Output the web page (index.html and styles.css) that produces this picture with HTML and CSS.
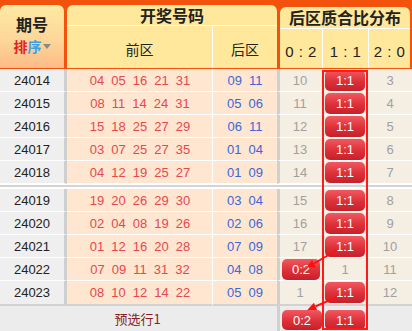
FILE: index.html
```html
<!DOCTYPE html>
<html lang="zh">
<head>
<meta charset="utf-8">
<title>后区质合比分布</title>
<link rel="stylesheet" href="styles.css">
</head>
<body>
<div class="board">
  <div class="head">
    <div class="h-issue">
      <div class="h-issue-t">期号</div>
      <div class="h-sort"><span class="s-red">排</span><span class="s-blue">序</span><span class="s-tri"></span></div>
    </div>
    <div class="h-draw">
      <div class="h-title">开奖号码</div>
      <div class="h-sub2"><div class="h-cell">前区</div><div class="h-cell h-line">后区</div></div>
    </div>
    <div class="h-dist">
      <div class="h-title h-title-d">后区质合比分布</div>
      <div class="h-sub3"><div class="h-cell h-num">0 : 2</div><div class="h-cell h-num h-line">1 : 1</div><div class="h-cell h-num h-line">2 : 0</div></div>
    </div>
  </div>

  <div class="rows">
    <div class="row"><div class="issue">24014</div><div class="front"><span>04</span><span>05</span><span>16</span><span>21</span><span>31</span></div><div class="back"><span>09</span><span>11</span></div><div class="d02">10</div><div class="d11"><span class="badge">1:1</span></div><div class="d20">3</div></div>
    <div class="row"><div class="issue">24015</div><div class="front"><span>08</span><span>11</span><span>14</span><span>24</span><span>31</span></div><div class="back"><span>05</span><span>06</span></div><div class="d02">11</div><div class="d11"><span class="badge">1:1</span></div><div class="d20">4</div></div>
    <div class="row"><div class="issue">24016</div><div class="front"><span>15</span><span>18</span><span>25</span><span>27</span><span>29</span></div><div class="back"><span>06</span><span>11</span></div><div class="d02">12</div><div class="d11"><span class="badge">1:1</span></div><div class="d20">5</div></div>
    <div class="row"><div class="issue">24017</div><div class="front"><span>03</span><span>07</span><span>25</span><span>27</span><span>35</span></div><div class="back"><span>01</span><span>04</span></div><div class="d02">13</div><div class="d11"><span class="badge">1:1</span></div><div class="d20">6</div></div>
    <div class="row"><div class="issue">24018</div><div class="front"><span>04</span><span>12</span><span>19</span><span>25</span><span>27</span></div><div class="back"><span>01</span><span>09</span></div><div class="d02">14</div><div class="d11"><span class="badge">1:1</span></div><div class="d20">7</div></div>
    <div class="sep"></div>
    <div class="row"><div class="issue">24019</div><div class="front"><span>19</span><span>20</span><span>26</span><span>29</span><span>30</span></div><div class="back"><span>03</span><span>04</span></div><div class="d02">15</div><div class="d11"><span class="badge">1:1</span></div><div class="d20">8</div></div>
    <div class="row"><div class="issue">24020</div><div class="front"><span>02</span><span>04</span><span>08</span><span>19</span><span>26</span></div><div class="back"><span>02</span><span>06</span></div><div class="d02">16</div><div class="d11"><span class="badge">1:1</span></div><div class="d20">9</div></div>
    <div class="row"><div class="issue">24021</div><div class="front"><span>01</span><span>12</span><span>16</span><span>20</span><span>28</span></div><div class="back"><span>07</span><span>09</span></div><div class="d02">17</div><div class="d11"><span class="badge">1:1</span></div><div class="d20">10</div></div>
    <div class="row"><div class="issue">24022</div><div class="front"><span>07</span><span>09</span><span>11</span><span>31</span><span>32</span></div><div class="back"><span>04</span><span>08</span></div><div class="d02"><span class="badge">0:2</span></div><div class="d11">1</div><div class="d20">11</div></div>
    <div class="row row-last"><div class="issue">24023</div><div class="front"><span>08</span><span>10</span><span>12</span><span>14</span><span>22</span></div><div class="back"><span>05</span><span>09</span></div><div class="d02">1</div><div class="d11"><span class="badge">1:1</span></div><div class="d20">12</div></div>
    <div class="foot">
      <div class="f-label">预选行1</div>
      <div class="f-d02"><span class="badge">0:2</span></div>
      <div class="f-d11"><span class="badge">1:1</span></div>
      <div class="f-d20"></div>
    </div>
  </div>

  <div class="frame"></div>
  <svg class="arrows" width="412" height="331" viewBox="0 0 412 331">
    <line x1="337" y1="250" x2="314" y2="263.5" stroke="#ff1010" stroke-width="2"/>
    <polygon points="306.5,267.5 316,267.5 312,260" fill="#ff1010"/>
    <line x1="337" y1="297" x2="315.5" y2="306.3" stroke="#ff1010" stroke-width="2"/>
    <polygon points="307.3,310 317.1,310 313.9,302.7" fill="#ff1010"/>
  </svg>
</div>
</body>
</html>
```

FILE: styles.css
```css
* { box-sizing: border-box; }
body {
  margin: 0;
  background: #fff;
  font-family: "Liberation Sans", Arial, "Noto Sans CJK SC", sans-serif;
}
.board {
  position: relative;
  width: 412px;
  height: 331px;
  overflow: hidden;
}

/* header */
.head {
  display: grid;
  grid-template-columns: 64px 210px 130px;
  column-gap: 3px;
  padding-right: 2px;
  height: 69px;
  background: #f2520c;
  padding-bottom: 1px;
}
.h-issue {
  margin-top: 5px;
  border-radius: 6px 6px 0 0;
  background: linear-gradient(#fee9a2, #fdd79a 55%, #fdbb86);
  display: flex;
  flex-direction: column;
  align-items: center;
  justify-content: flex-start;
  padding-top: 10px;
  font-family: "Noto Sans CJK SC", sans-serif;
}
.h-issue-t {
  font-size: 16px;
  font-weight: bold;
  color: #222;
  line-height: 18px;
  height: 18px;
}
.h-sort {
  font-size: 14px;
  font-weight: bold;
  line-height: 16px;
  height: 16px;
  margin-top: 5px;
  display: flex;
  align-items: center;
}
.s-red { color: #e2231f; }
.s-blue { color: #3aa0ea; }
.s-tri {
  width: 0;
  height: 0;
  border-left: 4px solid transparent;
  border-right: 4px solid transparent;
  border-top: 5px solid #8a8a8a;
  margin-left: 1px;
}
.h-draw, .h-dist {
  margin-top: 5px;
  border-radius: 6px 6px 0 0;
  background: #ffe89c;
  display: flex;
  flex-direction: column;
  font-family: "Noto Sans CJK SC", sans-serif;
  color: #222;
}
.h-dist { margin-top: 7px; }
.h-title {
  height: 21px;
  border-bottom: 1px solid #fff;
  font-size: 16px;
  font-weight: bold;
  line-height: 20px;
  text-align: center;
}
.h-title-d { height: 22px; line-height: 21px; }
.h-sub2 {
  flex: 1;
  display: grid;
  grid-template-columns: 145px 65px;
}
.h-sub3 {
  flex: 1;
  display: grid;
  grid-template-columns: 42px 46px 42px;
}
.h-cell {
  display: flex;
  align-items: center;
  justify-content: center;
  padding-top: 4px;
  font-size: 14px;
}
.h-line { border-left: 1px solid #fff; }
.h-num {
  font-family: "Liberation Sans", Arial, sans-serif;
  font-size: 15px;
  letter-spacing: 0.5px;
  padding-top: 6px;
  color: #222;
}

/* body rows */
.rows { display: flex; flex-direction: column; }
.row, .foot {
  display: grid;
  grid-template-columns: 67px 145px 65px 45px 46px 44px;
  height: 23px;
  font-size: 13px;
}
.row > div {
  border-bottom: 1px solid #fff;
  display: flex;
  align-items: center;
  justify-content: center;
}
.row-last > div { border-bottom: 2px solid #d2d2d2; height: 25px; }
.row-last { height: 25px; }
.issue {
  background: #efefef;
  border-right: 3px solid #cfcfcf;
  color: #222;
}
.front, .back {
  background: #fee6d1;
  gap: 7px;
}
.front { color: #e8474d; padding-left: 1px; }
.back { color: #3d66d6; border-left: 1px solid #fff; gap: 7px; }
.d02, .d11, .d20 {
  background: #f5efe3;
  color: #a0a0a0;
}
.d02 { border-left: 3px solid #d0d0d0; }
.row .d02 { justify-content: center; padding-right: 2px; }

.sep {
  height: 5px;
  background: linear-gradient(#fff 0 1px, #d4d4d4 1px 3px, #fff 3px);
}

.badge {
  display: inline-flex;
  align-items: center;
  justify-content: center;
  width: 40px;
  height: 21px;
  border-radius: 5px;
  background: linear-gradient(#f2585f, #dd3039 55%, #c6202a);
  color: #fff;
  font-size: 13px;
}
.row .d02 .badge { margin-left: 2px; }

/* footer */
.foot {
  height: 25px;
  background: #ececec;
}
.f-label {
  grid-column: 1 / 4;
  display: flex;
  align-items: center;
  justify-content: center;
  color: #8e1c1c;
  font-family: "Noto Sans CJK SC", sans-serif;
  font-size: 13px;
  padding-right: 2px;
}
.f-d02 {
  border-left: 3px solid #d0d0d0;
  display: flex;
  align-items: flex-end;
  justify-content: flex-end;
  padding-bottom: 1px;
}
.f-d11 {
  display: flex;
  align-items: flex-end;
  justify-content: center;
  padding-bottom: 1px;
}
.f-d02 .badge, .f-d11 .badge { height: 20px; }

/* overlays */
.frame {
  position: absolute;
  left: 322px;
  top: 70px;
  width: 46px;
  height: 260px;
  border: 2px solid #ff1a1a;
  pointer-events: none;
}
.arrows {
  position: absolute;
  left: 0;
  top: 0;
  pointer-events: none;
}
```
